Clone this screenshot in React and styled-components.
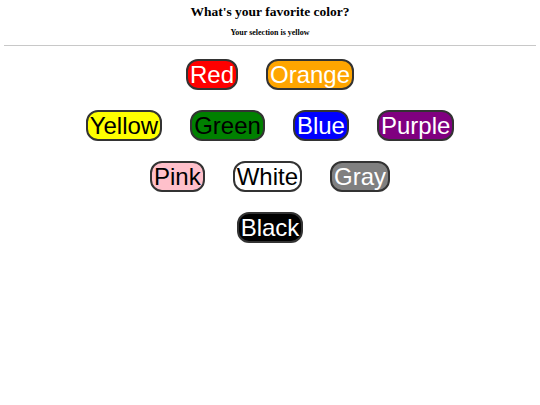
import React, { useState } from 'react';
import styled, { createGlobalStyle } from 'styled-components';

const GlobalStyle = createGlobalStyle`
  body {
    margin: 0;
    background: #fff;
  }
`;

const Page = styled.div`
  padding: 4px 4px 0;
`;

const Title = styled.h1`
  margin: 0;
  font-family: "Liberation Serif", "Times New Roman", serif;
  font-size: 13.5px;
  line-height: 16px;
  font-weight: bold;
  text-align: center;
  color: #000;
`;

const Subtitle = styled.h5`
  margin: 8px 0 0;
  font-family: "Liberation Serif", "Times New Roman", serif;
  font-size: 8px;
  line-height: 9px;
  font-weight: bold;
  text-align: center;
  color: #000;
`;

const Divider = styled.hr`
  margin: 8px 0 0;
  border: 0;
  border-top: 1px solid #c8c8c8;
`;

const Palette = styled.div`
  display: flex;
  flex-direction: column;
  gap: 20px;
  padding-top: 13px;
`;

const Row = styled.div`
  display: flex;
  justify-content: center;
  gap: 28px;
`;

const Swatch = styled.button`
  height: 31px;
  padding: 0 2px;
  border: 2px solid #333;
  border-radius: 12px;
  background: ${(props) => props.$bg};
  color: ${(props) => props.$fg};
  font-family: "Liberation Sans", Arial, sans-serif;
  font-size: 24px;
  line-height: 27px;
  cursor: pointer;
`;

const rows = [
  [
    { name: 'Red', bg: '#ff0000', fg: '#fff' },
    { name: 'Orange', bg: '#ffa500', fg: '#fff' }
  ],
  [
    { name: 'Yellow', bg: '#ffff00', fg: '#000' },
    { name: 'Green', bg: '#008000', fg: '#000' },
    { name: 'Blue', bg: '#0000ff', fg: '#fff' },
    { name: 'Purple', bg: '#800080', fg: '#fff' }
  ],
  [
    { name: 'Pink', bg: '#ffc0cb', fg: '#000' },
    { name: 'White', bg: '#ffffff', fg: '#000' },
    { name: 'Gray', bg: '#808080', fg: '#fff' }
  ],
  [{ name: 'Black', bg: '#000000', fg: '#fff' }]
];

const App = () => {
  const [selected, setSelected] = useState('yellow');

  return (
    <Page>
      <GlobalStyle />
      <Title>What's your favorite color?</Title>
      <Subtitle>Your selection is {selected}</Subtitle>
      <Divider />
      <Palette>
        {rows.map((row, i) => (
          <Row key={i}>
            {row.map((c) => (
              <Swatch
                key={c.name}
                $bg={c.bg}
                $fg={c.fg}
                onClick={() => setSelected(c.name.toLowerCase())}
              >
                {c.name}
              </Swatch>
            ))}
          </Row>
        ))}
      </Palette>
    </Page>
  );
};

export default App;
